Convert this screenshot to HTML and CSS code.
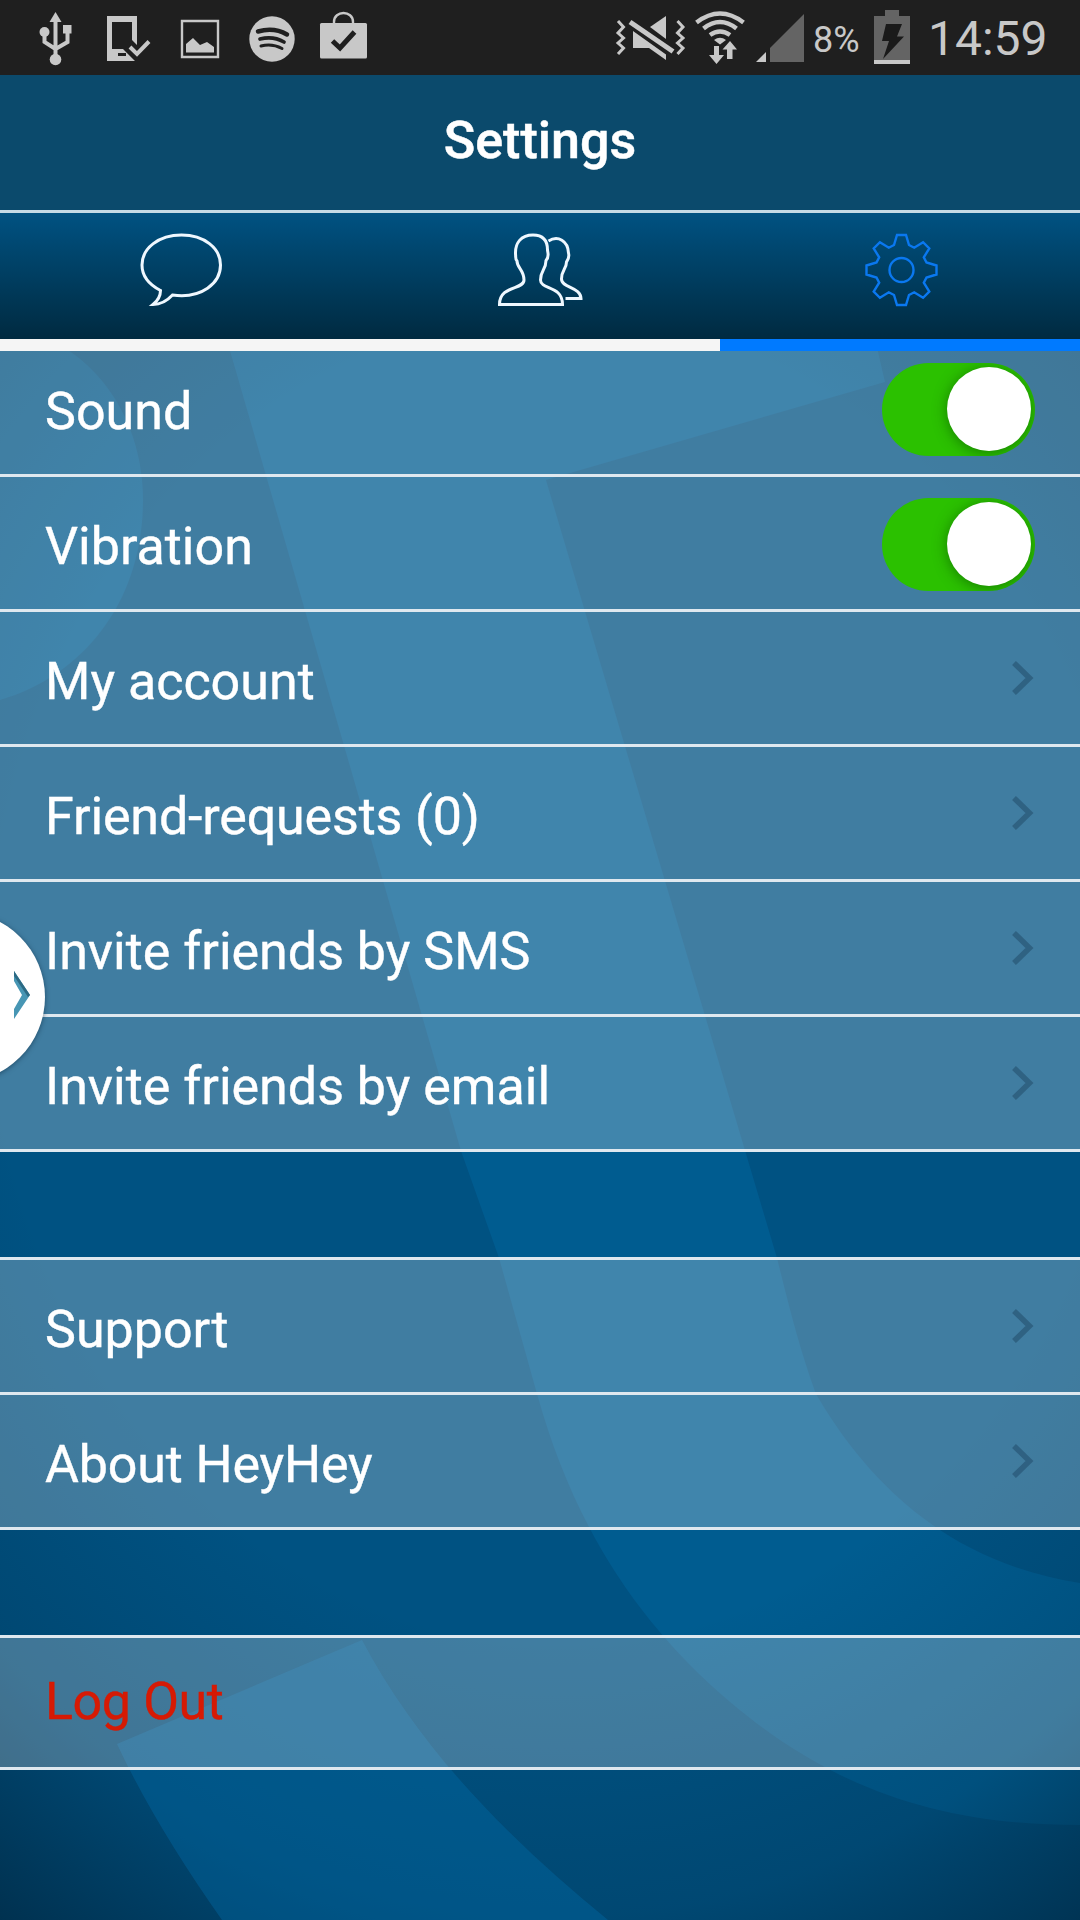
FILE: index.html
```html
<!DOCTYPE html>
<html lang="en">
<head>
<meta charset="utf-8">
<title>Settings</title>
<link rel="stylesheet" href="styles.css">
</head>
<body>
<svg width="0" height="0" class="defs">
  <symbol id="chev" viewBox="0 0 30 44"><path d="M8 7 L23.500 22 L8 37" fill="none" stroke="#2d5d7d" stroke-opacity=".85" stroke-width="5.500"/></symbol>
</svg>
<div class="screen">
  <svg class="backdrop" viewBox="0 0 1080 1920" aria-hidden="true">
    <defs>
      <radialGradient id="vig" gradientUnits="userSpaceOnUse" cx="0" cy="0" r="1" gradientTransform="translate(560 980) scale(1030 1200)">
        <stop offset="0" stop-color="#00192b" stop-opacity="0"/>
        <stop offset=".55" stop-color="#00192b" stop-opacity="0"/>
        <stop offset=".78" stop-color="#00192b" stop-opacity=".18"/>
        <stop offset="1" stop-color="#00192b" stop-opacity=".68"/>
      </radialGradient>
    </defs>
    <rect width="1080" height="1920" fill="#005282"/>
    <path fill="#005c90" d="M0 325 C85 335 143 410 143 500 C143 600 85 675 0 700Z"/>
    <path fill="#005c90" d="M224 330 L461 1151 L499 1258 L537 1394 C575 1530 640 1625 730 1702 C840 1795 950 1825 1080 1825 V1583 C930 1560 855 1460 816 1394 C800 1350 790 1310 777 1258 L546 480 L885 382 L873 330Z"/>
    <rect width="1080" height="1920" fill="url(#vig)"/>
    <path fill="#006aa4" fill-opacity=".42" d="M362 1640 L117 1744 Q155 1825 222 1920 H608 C510 1840 420 1750 362 1640Z"/>
  </svg>

  <div class="status">
    <svg width="400" height="75" viewBox="0 0 400 75" fill="#c8c8c8" aria-hidden="true">
      <g><path d="M55.500 12 L61.500 22 H49.500Z"/><circle cx="55.500" cy="59.500" r="5.800"/><circle cx="44.500" cy="32" r="5"/><path d="M63 25h8.500v8.500h-8.500z"/>
      <path d="M55.500 20V58M44.500 32V42L55.500 49M67.500 32V42L55.500 49" fill="none" stroke="#c8c8c8" stroke-width="4"/></g>
      <path fill-rule="evenodd" d="M107 16H137V45L132 40V22H112V49H123L135 61H107ZM118 53V56H126V53Z"/>
      <path d="M130 47L137 54L149 41.500" fill="none" stroke="#c8c8c8" stroke-width="4"/>
      <path d="M182 21H218V57H182Z" fill="none" stroke="#c8c8c8" stroke-width="2.400"/>
      <path d="M186 52.500V44L193 38L200 45L207 42L214 47V52.500Z"/>
      <circle cx="272" cy="39" r="22.700"/>
      <g fill="none" stroke="#1f1f1f" stroke-linecap="round"><path d="M258 31.500Q274 27 287 34.500" stroke-width="4.500"/><path d="M260 39Q273 35.500 284 42" stroke-width="3.700"/><path d="M261 46Q272 43 282 48.500" stroke-width="3"/></g>
      <rect x="320" y="23" width="47" height="35.500" rx="1.500"/>
      <path d="M334 24V22C334 10 353 10 353 22V24" fill="none" stroke="#c8c8c8" stroke-width="2.400"/>
      <path d="M332.500 41L340 48L354.500 32" fill="none" stroke="#1f1f1f" stroke-width="5"/>
    </svg>
    <svg class="signals" width="210" height="75" viewBox="600 0 210 75" fill="#c8c8c8" aria-hidden="true">
      <path d="M618 21L623.500 27L618 33L623.500 38L618 43L623.500 48L618 54M677.500 21L683 27L677.500 33L683 38L677.500 43L683 48L677.500 54" fill="none" stroke="#c8c8c8" stroke-width="3"/>
      <path d="M650 27L666 16V39Z"/>
      <path d="M630 22L673 51.500" stroke="#c8c8c8" stroke-width="5"/>
      <path d="M633 31L666 54.500V60L649 48H633Z"/>
      <g fill="none" stroke="#c8c8c8" stroke-width="4.500"><path d="M696.500 22.500Q720 4.500 743.500 22.500"/><path d="M703.500 28.500Q720 15.500 736.500 28.500"/><path d="M710 35Q720 28 730 35"/></g>
      <path d="M714 40Q720 35.500 726 40L720 44.500Z"/>
      <path d="M714 46H719V55H724L716.500 64L709 55H714ZM727 59V49.500H722.500L730 41L737 49.500H732.500V59Z"/>
      <path d="M756 62L766 52V62Z"/><path d="M770 62V48L804 14V62Z" fill="#646464"/>
    </svg>
    <span class="percent">8%</span>
    <svg class="battery" width="36" height="75" viewBox="874 0 36 75" aria-hidden="true">
      <path d="M874 16H885V10H899V16H910V60H874Z" fill="#646464"/><path d="M874 60H910V64H874Z" fill="#c8c8c8"/><path d="M886 24H902L897 36.500H904L883 59L889 41H882Z" fill="#1a1a1a"/>
    </svg>
    <span class="clock">14:59</span>
  </div>

  <header class="title">Settings</header>
  <nav class="tabs">
    <div class="tab"><svg width="90" height="80" viewBox="135 227 90 80"><path d="M160.500 290.500C148 284 142 275 142 265C142 248 159 235 181.500 235C204 235 220.500 248 220.500 265C220.500 283 202 299 172.500 295C167 301 160 304.500 153 304.500C158 300.500 160.500 296 160.500 290.500Z"/></svg></div>
    <div class="tab"><svg width="90" height="80" viewBox="495 227 90 80"><path d="M499.500 304.500H562.500C562.500 285 540.500 290 540.500 280C540.500 270 546 270 546 260.500C549.500 257 548 254 547.500 250C547.500 241 543.500 235 533 235C521 235 515 243 515.500 254C516 257 515 259 517 261C517 268 524 270 524 280C524 290 499.500 285 499.500 304.500ZM548.500 241C558 235 568 241 568.500 253C569.500 257 568 260 566.500 262C566.500 269 561.500 270 561.500 279C561.500 288 581 287 581 298.500H565.500"/></svg></div>
    <div class="tab active"><svg width="90" height="80" viewBox="-46.500 -43 90 80"><circle r="12"/><path d="M-4.500 -35H4.500L7.500 -25L12.700 -22.300L21.600 -27.800L27.800 -21.600L22.300 -12.700L25 -7.500L35 -4.500V4.500L25 7.500L22.300 12.700L27.800 21.600L21.600 27.800L12.700 22.300L7.500 25L4.500 35H-4.500L-7.500 25L-12.700 22.300L-21.600 27.800L-27.800 21.600L-22.300 12.700L-25 7.500L-35 4.500V-4.500L-25 -7.500L-22.300 -12.700L-27.800 -21.600L-21.600 -27.800L-12.700 -22.300L-7.500 -25Z"/></svg></div>
  </nav>

  <main>
    <section class="group first">
      <div class="row short"><span>Sound</span><i class="switch"></i></div>
      <div class="row"><span>Vibration</span><i class="switch"></i></div>
      <div class="row"><span>My account</span><svg class="chev"><use href="#chev"/></svg></div>
      <div class="row"><span class="tight">Friend-requests (0)</span><svg class="chev"><use href="#chev"/></svg></div>
      <div class="row"><span>Invite friends by SMS</span><svg class="chev"><use href="#chev"/></svg></div>
      <div class="row"><span>Invite friends by email</span><svg class="chev"><use href="#chev"/></svg></div>
    </section>
    <section class="group">
      <div class="row"><span>Support</span><svg class="chev"><use href="#chev"/></svg></div>
      <div class="row"><span class="tight">About HeyHey</span><svg class="chev"><use href="#chev"/></svg></div>
    </section>
    <section class="group">
      <div class="row logout"><span>Log Out</span></div>
    </section>
  </main>

  <div class="handle"><svg width="20" height="50" viewBox="0 0 20 50"><path d="M1 1L17 25L1 49V39L9 25L1 11Z" fill="#4796b4"/><path d="M1 1L17 25L15 27L1 6Z" fill="#2c6a84"/></svg></div>
</div>
</body>
</html>
```
FILE: styles.css
```css
* { box-sizing: border-box; }
body { margin: 0; font-family: Roboto, "Noto Sans", sans-serif; color: #fff; }
.defs { position: absolute; }
.screen { position: relative; width: 1080px; height: 1920px; overflow: hidden; display: flex; flex-direction: column; }
.backdrop { position: absolute; inset: 0; width: 1080px; height: 1920px; z-index: -1; }

.status { height: 75px; background: #1f1f1f; display: flex; align-items: center; color: #c8c8c8; }
.signals { margin-left: 200px; }
.percent { font-size: 36px; width: 64px; padding-left: 3px; margin-top: 4px; white-space: nowrap; }
.clock { font-size: 48px; margin-left: 18px; margin-top: 2px; white-space: nowrap; }

.title { height: 138px; background: #0b4a6c; border-bottom: 3px solid #c5dbe6; display: flex; align-items: center; justify-content: center; font-size: 52px; font-weight: 500; -webkit-text-stroke: .5px #fff; padding-bottom: 4px; }

.tabs { display: flex; height: 138px; background: linear-gradient(#005282, #002a40); background-size: 100% 126px; }
.tab { flex: 1; display: flex; justify-content: center; padding-top: 14px; border-bottom: 12px solid #f5f5f5; }
.tab svg { fill: none; stroke: #eff8ff; stroke-width: 3; }
.tab.active { border-color: #007aff; }
.tab.active svg { stroke: #0a78f0; stroke-width: 2.4; }

.group { margin-bottom: 105px; border-top: 3px solid #dfe8ef; }
.group.first { border-top: 0; }
.row { height: 135px; padding: 2px 45px 0; display: flex; align-items: center; justify-content: space-between; background: rgba(255, 255, 255, .25); background-clip: padding-box; border-bottom: 3px solid #dfe8ef; font-size: 52px; -webkit-text-stroke: .4px currentColor; }
.row.short { height: 126px; padding: 0 45px 7px; }
.row span { padding-top: 4px; }
.row .tight { letter-spacing: -.15px; }
.row.logout { height: 132px; padding: 0 45px 6px; color: #d61a04; letter-spacing: -.4px; }
.chev { width: 30px; height: 44px; margin-right: -1px; margin-top: -2px; }

.switch { width: 153px; height: 93px; border-radius: 47px; background: #2bc100; display: flex; justify-content: flex-end; align-items: center; padding-right: 4px; overflow: hidden; }
.switch::after { content: ""; width: 84px; height: 84px; border-radius: 50%; background: #fff; box-shadow: 0 2px 14px rgba(0, 60, 0, .5); }

.handle { position: absolute; left: -125px; top: 912px; width: 170px; height: 170px; border-radius: 50%; background: #fff; box-shadow: 0 1px 5px rgba(0, 30, 50, .5); display: flex; align-items: center; justify-content: flex-end; padding: 0 12px 4px 0; }
```
